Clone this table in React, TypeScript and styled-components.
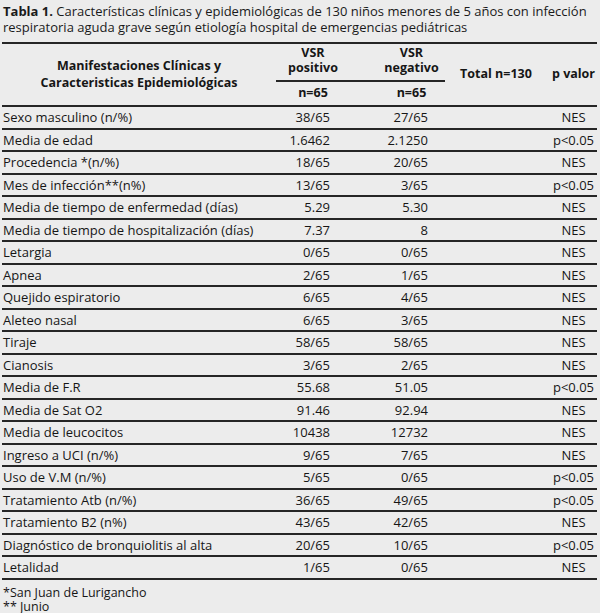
import React from "react";
import styled, { createGlobalStyle } from "styled-components";

const GlobalStyle = createGlobalStyle`
  html, body {
    margin: 0;
    padding: 0;
    background: #ececec;
  }
  body {
    font-family: "Open Sans", "Noto Sans", "DejaVu Sans", sans-serif;
    color: #161616;
  }
`;

const Page = styled.div`
  width: 600px;
  height: 613px;
  box-sizing: border-box;
  padding: 3px 3px 0 2px;
  background: #ececec;
  overflow: hidden;
`;

const Caption = styled.div`
  font-size: 13px;
  line-height: 16px;
  padding-left: 1px;
  color: #1a1a1a;
`;

const CaptionLabel = styled.span`
  font-weight: 700;
`;

const Table = styled.div`
  margin-top: 7px;
  border-top: 2px solid #262626;
`;

const cols = "274px 76px 93px 105px 47px";

const Header = styled.div`
  display: grid;
  grid-template-columns: ${cols};
  grid-template-rows: 38px 21px;
  height: 61px;
  border-bottom: 2px solid #262626;
  font-weight: 700;
  font-size: 12.5px;
  line-height: 15px;
`;

const HeadCell = styled.div<{
  $col: number;
  $row: string;
  $shift?: number;
  $underline?: boolean;
  $lh?: number;
}>`
  display: flex;
  align-items: ${(p) => (p.$underline ? "flex-end" : "center")};
  justify-content: center;
  text-align: center;
  white-space: nowrap;
  line-height: ${(p) => p.$lh ?? 15}px;
  grid-column: ${(p) => p.$col};
  grid-row: ${(p) => p.$row};
  padding-left: ${(p) => Math.max(0, p.$shift ?? 0)}px;
  padding-right: ${(p) => Math.max(0, -(p.$shift ?? 0))}px;
  padding-bottom: ${(p) => (p.$underline ? "5px" : "0")};
  border-bottom: ${(p) => (p.$underline ? "2px solid #262626" : "none")};
`;

const Row = styled.div`
  display: grid;
  grid-template-columns: ${cols};
  height: 22.5px;
  box-sizing: border-box;
  border-bottom: 2px solid #262626;
  align-items: center;
  font-size: 13px;
  line-height: 16px;
`;

const Label = styled.div`
  padding-left: 1px;
  white-space: nowrap;
`;

const Num = styled.div<{ $pad: number }>`
  text-align: right;
  padding-right: ${(p) => p.$pad}px;
  white-space: nowrap;
`;

const PVal = styled.div`
  grid-column: 5;
  text-align: center;
  white-space: nowrap;
`;

const Notes = styled.div`
  margin-top: 6px;
  font-size: 12.5px;
  line-height: 14px;
  padding-left: 1px;
`;

const rows: [string, string, string, string][] = [
  ["Sexo masculino (n/%)", "38/65", "27/65", "NES"],
  ["Media de edad", "1.6462", "2.1250", "p<0.05"],
  ["Procedencia *(n/%)", "18/65", "20/65", "NES"],
  ["Mes de infección**(n%)", "13/65", "3/65", "p<0.05"],
  ["Media de tiempo de enfermedad (días)", "5.29", "5.30", "NES"],
  ["Media de tiempo de hospitalización (días)", "7.37", "8", "NES"],
  ["Letargia", "0/65", "0/65", "NES"],
  ["Apnea", "2/65", "1/65", "NES"],
  ["Quejido espiratorio", "6/65", "4/65", "NES"],
  ["Aleteo nasal", "6/65", "3/65", "NES"],
  ["Tiraje", "58/65", "58/65", "NES"],
  ["Cianosis", "3/65", "2/65", "NES"],
  ["Media de F.R", "55.68", "51.05", "p<0.05"],
  ["Media de Sat O2", "91.46", "92.94", "NES"],
  ["Media de leucocitos", "10438", "12732", "NES"],
  ["Ingreso a UCI (n/%)", "9/65", "7/65", "NES"],
  ["Uso de V.M (n/%)", "5/65", "0/65", "p<0.05"],
  ["Tratamiento Atb (n/%)", "36/65", "49/65", "p<0.05"],
  ["Tratamiento B2 (n%)", "43/65", "42/65", "NES"],
  ["Diagnóstico de bronquiolitis al alta", "20/65", "10/65", "p<0.05"],
  ["Letalidad", "1/65", "0/65", "NES"],
];

export default function App() {
  return (
    <Page>
      <GlobalStyle />
      <Caption>
        <CaptionLabel>Tabla 1.</CaptionLabel> Características clínicas y epidemiológicas de 130 niños menores de 5 años con infección
        respiratoria aguda grave según etiología hospital de emergencias pediátricas
      </Caption>
      <Table>
        <Header>
          <HeadCell $col={1} $row="1 / span 2" $lh={17}>
            Manifestaciones Clínicas y
            <br />
            Caracteristicas Epidemiológicas
          </HeadCell>
          <HeadCell $col={2} $row="1" $underline $shift={-2}>
            VSR
            <br />
            positivo
          </HeadCell>
          <HeadCell $col={3} $row="1" $underline $shift={26}>
            VSR
            <br />
            negativo
          </HeadCell>
          <HeadCell $col={4} $row="1 / span 2" $shift={-3}>
            Total n=130
          </HeadCell>
          <HeadCell $col={5} $row="1 / span 2">
            p valor
          </HeadCell>
          <HeadCell $col={2} $row="2" $shift={-2}>
            n=65
          </HeadCell>
          <HeadCell $col={3} $row="2" $shift={26}>
            n=65
          </HeadCell>
        </Header>
        {rows.map(([label, pos, neg, p]) => (
          <Row key={label}>
            <Label>{label}</Label>
            <Num $pad={22}>{pos}</Num>
            <Num $pad={17}>{neg}</Num>
            <PVal>{p}</PVal>
          </Row>
        ))}
      </Table>
      <Notes>
        *San Juan de Lurigancho
        <br />
        ** Junio
      </Notes>
    </Page>
  );
}
